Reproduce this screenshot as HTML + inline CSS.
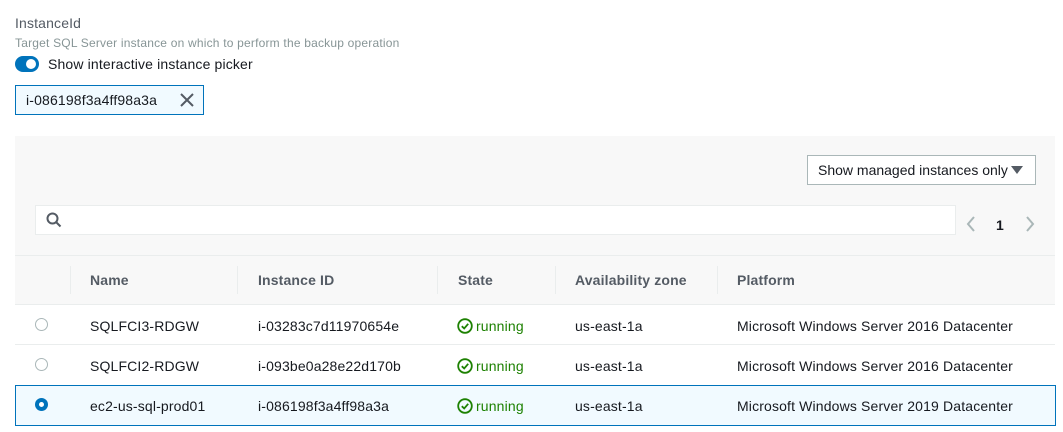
<!DOCTYPE html>
<html><head><style>
*{box-sizing:border-box;margin:0;padding:0}
body{width:1063px;height:432px;background:#fff;font-family:"Liberation Sans",Arial,sans-serif;color:#16191f;position:relative;overflow:hidden;font-size:14px;letter-spacing:0.15px}
.a{position:absolute;white-space:nowrap}
.hd{font-weight:bold;color:#545b64;font-size:14px;top:272px}
.c{font-size:14px;color:#16191f}
.run{color:#1d8102}
.vd{position:absolute;top:266px;width:1px;height:28px;background:#eaeded}
</style></head><body>
<div class="a" style="left:15px;top:15px;font-size:14px;color:#545b64">InstanceId</div>
<div class="a" style="left:15px;top:36px;font-size:12px;color:#879596;letter-spacing:0.2px">Target SQL Server instance on which to perform the backup operation</div>
<div class="a" style="left:15px;top:56px;width:24px;height:16px;border-radius:8px;background:#0073bb"></div>
<div class="a" style="left:26px;top:59px;width:10px;height:10px;border-radius:5px;background:#fff"></div>
<div class="a" style="left:48px;top:56px;font-size:14px">Show interactive instance picker</div>
<div class="a" style="left:15px;top:85px;width:189px;height:30px;border:1px solid #0073bb;background:#f1faff"></div>
<div class="a" style="left:26px;top:92px;font-size:14px">i-086198f3a4ff98a3a</div>
<svg class="a" style="left:180px;top:93px" width="14" height="14"><path d="M1 1L13 13M13 1L1 13" stroke="#545b64" stroke-width="2"/></svg>
<div class="a" style="left:15px;top:136px;width:1040px;height:168px;background:#f8f8f8"></div>
<div class="a" style="left:807px;top:155px;width:229px;height:30px;border:1px solid #aab7b8;background:#fff"></div>
<div class="a" style="left:818px;top:162px;font-size:14px;letter-spacing:0">Show managed instances only</div>
<svg class="a" style="left:1011px;top:165px" width="12" height="10"><path d="M0 1H12L6 9Z" fill="#545b64"/></svg>
<div class="a" style="left:35px;top:205px;width:921px;height:30px;border:1px solid #eaeded;background:#fff"></div>
<svg class="a" style="left:46px;top:212px" width="16" height="16"><circle cx="6.5" cy="6.5" r="5" stroke="#545b64" stroke-width="2" fill="none"/><path d="M10 10L14.5 14.5" stroke="#545b64" stroke-width="2"/></svg>
<svg class="a" style="left:966px;top:216px" width="10" height="16"><path d="M8 1L2 8L8 15" stroke="#aab7b8" stroke-width="2" fill="none"/></svg>
<div class="a" style="left:996px;top:217px;font-size:14px;font-weight:bold">1</div>
<svg class="a" style="left:1025px;top:216px" width="10" height="16"><path d="M2 1L8 8L2 15" stroke="#aab7b8" stroke-width="2" fill="none"/></svg>
<div class="a" style="left:15px;top:255px;width:1040px;height:1px;background:#eaeded"></div>
<div class="vd" style="left:70px"></div><div class="vd" style="left:237px"></div><div class="vd" style="left:437px"></div><div class="vd" style="left:555px"></div><div class="vd" style="left:717px"></div>
<div class="a hd" style="left:90px">Name</div>
<div class="a hd" style="left:258px">Instance ID</div>
<div class="a hd" style="left:458px">State</div>
<div class="a hd" style="left:575px">Availability zone</div>
<div class="a hd" style="left:737px">Platform</div>
<div class="a" style="left:15px;top:304px;width:1040px;height:1px;background:#eaeded"></div>
<div class="a" style="left:15px;top:344px;width:1040px;height:1px;background:#eaeded"></div>
<div class="a" style="left:15px;top:385px;width:1041px;height:41px;border:1px solid #0073bb;background:#f1faff"></div>

<div class="a" style="left:35px;top:318px;width:13px;height:13px;border-radius:50%;border:1px solid #aab7b8;background:#fff"></div>
<div class="a" style="left:35px;top:358px;width:13px;height:13px;border-radius:50%;border:1px solid #aab7b8;background:#fff"></div>
<div class="a" style="left:35px;top:398px;width:13px;height:13px;border-radius:50%;border:4px solid #0073bb;background:#fff"></div>

<div class="a c" style="left:90px;top:318px">SQLFCI3-RDGW</div>
<div class="a c" style="left:258px;top:318px">i-03283c7d11970654e</div>
<div class="a c" style="left:575px;top:318px">us-east-1a</div>
<div class="a c" style="left:737px;top:318px">Microsoft Windows Server 2016 Datacenter</div>
<div class="a c" style="left:90px;top:358px">SQLFCI2-RDGW</div>
<div class="a c" style="left:258px;top:358px">i-093be0a28e22d170b</div>
<div class="a c" style="left:575px;top:358px">us-east-1a</div>
<div class="a c" style="left:737px;top:358px">Microsoft Windows Server 2016 Datacenter</div>
<div class="a c" style="left:90px;top:398px">ec2-us-sql-prod01</div>
<div class="a c" style="left:258px;top:398px">i-086198f3a4ff98a3a</div>
<div class="a c" style="left:575px;top:398px">us-east-1a</div>
<div class="a c" style="left:737px;top:398px">Microsoft Windows Server 2019 Datacenter</div>

<svg class="a" style="left:457px;top:318px" width="16" height="16"><circle cx="8" cy="8" r="6.8" stroke="#1d8102" stroke-width="1.8" fill="none"/><path d="M4.8 8.2L7.2 10.5L11.2 5.8" stroke="#1d8102" stroke-width="1.8" fill="none"/></svg>
<div class="a run" style="left:476px;top:318px">running</div>
<svg class="a" style="left:457px;top:358px" width="16" height="16"><circle cx="8" cy="8" r="6.8" stroke="#1d8102" stroke-width="1.8" fill="none"/><path d="M4.8 8.2L7.2 10.5L11.2 5.8" stroke="#1d8102" stroke-width="1.8" fill="none"/></svg>
<div class="a run" style="left:476px;top:358px">running</div>
<svg class="a" style="left:457px;top:398px" width="16" height="16"><circle cx="8" cy="8" r="6.8" stroke="#1d8102" stroke-width="1.8" fill="none"/><path d="M4.8 8.2L7.2 10.5L11.2 5.8" stroke="#1d8102" stroke-width="1.8" fill="none"/></svg>
<div class="a run" style="left:476px;top:398px">running</div>
</body></html>
